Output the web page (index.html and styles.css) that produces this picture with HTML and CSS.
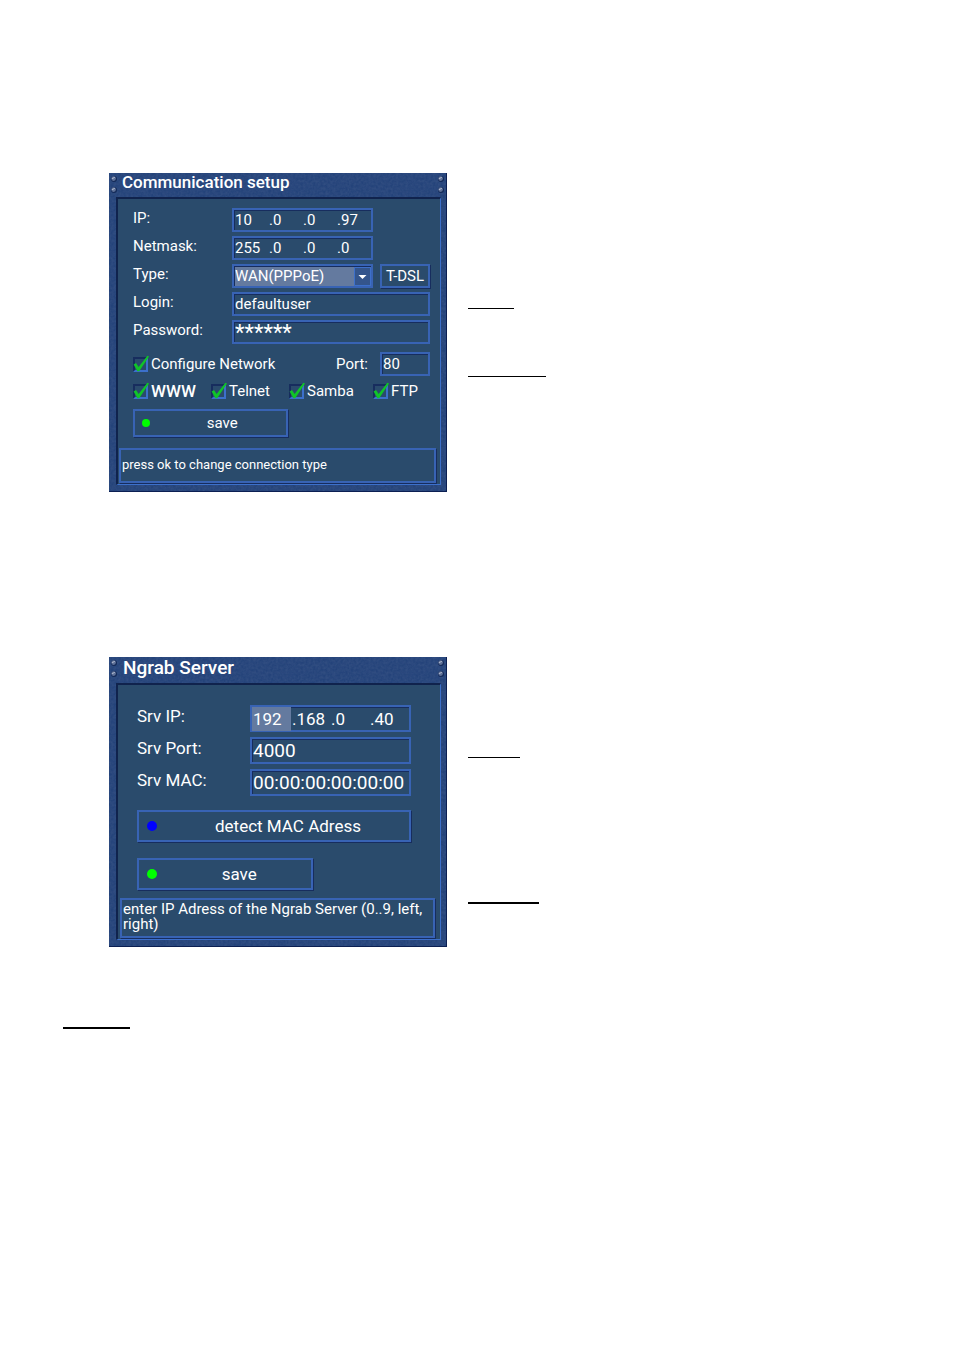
FILE: index.html
```
<!DOCTYPE html>
<html lang="en">
<head>
<meta charset="utf-8">
<meta name="viewport" content="width=device-width, initial-scale=1">
<title>Network setup</title>
<link rel="stylesheet" href="styles.css">
</head>
<body>
<svg class="defs" aria-hidden="true">
  <symbol id="tick" viewBox="0 0 17 17"><path d="M.6 9.6 3 8 5.6 12 14.4.8 16 1.6 6.2 16.2 4.4 16.2Z" fill="#10c428"/></symbol>
  <symbol id="screws" viewBox="0 0 8 18">
    <circle cx="4" cy="4" r="3" fill="#142a58"/><circle cx="3.6" cy="3.6" r="2.3" fill="#5f7198"/><path d="M2 3.6 4.8 2.4" stroke="#b3bdd0"/>
    <circle cx="4" cy="15" r="3" fill="#142a58"/><circle cx="3.6" cy="14.6" r="2.3" fill="#5f7198"/><path d="M2 14.6 4.8 13.4" stroke="#b3bdd0"/>
  </symbol>
</svg>
<main class="page">
  <section class="entry">
    <form class="window">
      <header class="titlebar">
        <svg class="screws"><use href="#screws"/></svg>
        <h2 class="title">Communication setup</h2>
        <svg class="screws"><use href="#screws"/></svg>
      </header>
      <div class="panel">
        <div class="fields">
          <label for="ip1">IP:</label>
          <div class="box segments">
            <span class="seg"><input id="ip1" value="10"></span>
            <span class="seg">.<input aria-label="IP part 2" value="0"></span>
            <span class="seg">.<input aria-label="IP part 3" value="0"></span>
            <span class="seg">.<input aria-label="IP part 4" value="97"></span>
          </div>
          <label for="nm1">Netmask:</label>
          <div class="box segments">
            <span class="seg"><input id="nm1" value="255"></span>
            <span class="seg">.<input aria-label="Netmask part 2" value="0"></span>
            <span class="seg">.<input aria-label="Netmask part 3" value="0"></span>
            <span class="seg">.<input aria-label="Netmask part 4" value="0"></span>
          </div>
          <label for="type">Type:</label>
          <div class="picker">
            <select id="type" class="box select"><option>WAN(PPPoE)</option></select>
            <svg class="arrow" viewBox="0 0 17 19"><path d="M.5.5h16v18H.5z" fill="#34558c" stroke="#3d70ca"/><path d="M4.5 8h8l-4 4z" fill="#fff"/></svg>
          </div>
          <button type="button" class="box tdsl">T-DSL</button>
          <label for="login">Login:</label>
          <input id="login" class="box wide" value="defaultuser">
          <label for="pass">Password:</label>
          <input id="pass" class="box wide stars" value="******">
        </div>
        <div class="network">
          <label class="check"><input type="checkbox" checked><svg><use href="#tick"/></svg>Configure Network</label>
          <label for="port">Port:</label>
          <input id="port" class="box port" value="80">
        </div>
        <div class="services">
          <label class="check"><input type="checkbox" checked><svg><use href="#tick"/></svg><span class="strong">WWW</span></label>
          <label class="check"><input type="checkbox" checked><svg><use href="#tick"/></svg>Telnet</label>
          <label class="check"><input type="checkbox" checked><svg><use href="#tick"/></svg>Samba</label>
          <label class="check"><input type="checkbox" checked><svg><use href="#tick"/></svg>FTP</label>
        </div>
        <button type="button" class="action save"><i class="dot green"></i><span>save</span></button>
        <p class="status">press ok to change connection type</p>
      </div>
    </form>
    <div class="notes">
      <hr class="rule login-rule">
      <hr class="rule password-rule">
    </div>
  </section>

  <section class="entry">
    <form class="window server">
      <header class="titlebar">
        <svg class="screws"><use href="#screws"/></svg>
        <h2 class="title">Ngrab Server</h2>
        <svg class="screws"><use href="#screws"/></svg>
      </header>
      <div class="panel">
        <div class="fields">
          <label for="srvip">Srv IP:</label>
          <div class="box segments">
            <span class="seg active"><input id="srvip" value="192"></span>
            <span class="seg">.<input aria-label="Srv IP part 2" value="168"></span>
            <span class="seg">.<input aria-label="Srv IP part 3" value="0"></span>
            <span class="seg">.<input aria-label="Srv IP part 4" value="40"></span>
          </div>
          <label for="srvport">Srv Port:</label>
          <input id="srvport" class="box" value="4000">
          <label for="srvmac">Srv MAC:</label>
          <input id="srvmac" class="box" value="00:00:00:00:00:00">
        </div>
        <button type="button" class="action detect"><i class="dot blue"></i><span>detect MAC Adress</span></button>
        <button type="button" class="action save"><i class="dot green"></i><span>save</span></button>
        <p class="status">enter IP Adress of the Ngrab Server (0..9, left, right)</p>
      </div>
    </form>
    <div class="notes">
      <hr class="rule ip-rule">
      <hr class="rule detect-rule">
    </div>
  </section>
  <hr class="rule section-rule">
</main>
</body>
</html>
```
FILE: styles.css
```
* { box-sizing: border-box; }
body { margin: 0; background: #fff; color: #000; font-family: Roboto, "Liberation Sans", sans-serif; }
.defs { position: absolute; width: 0; height: 0; }
.page { padding: 173px 0 80px 63px; }
.entry {
  display: grid;
  grid-template-columns: minmax(338px, 40%) 1fr;
  column-gap: 21px;
  margin: 0 0 165px 46px;
}
.entry + .entry { margin-bottom: 80px; }

.window {
  display: flex;
  flex-direction: column;
  padding: 0 5px 6px 7px;
  color: #fff;
  background-color: #24437a;
  background-image: url("data:image/svg+xml,%3Csvg xmlns='http://www.w3.org/2000/svg' width='120' height='120'%3E%3Cfilter id='n'%3E%3CfeTurbulence type='fractalNoise' baseFrequency='.4' numOctaves='2' stitchTiles='stitch'/%3E%3CfeColorMatrix values='0 0 0 0 .05 0 0 0 0 .1 0 0 0 0 .25 1 0 0 0 -.25'/%3E%3C/filter%3E%3Crect width='120' height='120' filter='url(%23n)' opacity='.8'/%3E%3C/svg%3E");
  border-bottom: 1px solid #0b1f52;
  border-right: 1px solid #0b1f52;
}
.titlebar { display: flex; align-items: flex-start; height: 24px; margin: 0 -4px 0 -6px; }
.screws { width: 8px; height: 18px; margin-top: 2px; }
.title { flex: 1; margin: 0 0 0 4px; font-size: 17px; line-height: 19px; font-weight: 500; }

.panel {
  flex: 1;
  display: flex;
  flex-direction: column;
  padding: 9px 4px 1px 1px;
  background: #2a4b6c;
  border: 2px solid #10234d;
  border-right: 1px solid #3c70cb;
  border-bottom: 1px solid #3c70cb;
}
.fields, .network, .services { margin: 0 6px 0 14px; font-size: 15px; }
.fields {
  display: grid;
  grid-template-columns: 92px minmax(0, 1fr) 50px;
  column-gap: 7px;
  row-gap: 4px;
}
.fields > label { grid-column: 1; line-height: 20px; }
.box {
  width: 100%;
  min-width: 0;
  height: 24px;
  margin: 0;
  padding: 0 1px;
  border: 2px solid #3863b4;
  border-radius: 0;
  outline: 0;
  background: #2a4b6c;
  box-shadow: inset 1px 1px #172d5e;
  color: #fff;
  font: inherit;
}
.wide { grid-column: 2 / 4; }
.segments { display: grid; grid-template-columns: 34px 34px 34px 1fr; line-height: 21px; padding: 0; }
.seg { display: flex; min-width: 0; padding-left: 1px; }
.seg input { flex: 1; width: 0; min-width: 0; padding: 0; border: 0; outline: 0; background: none; color: inherit; font: inherit; }
.active { background: #647a9f; }
.picker { position: relative; display: flex; }
.select { appearance: none; background: #647a9f; }
.arrow { position: absolute; top: 3px; right: 2px; width: 17px; height: 19px; pointer-events: none; }
.tdsl { box-shadow: 1px 1px #172d5e; }
.stars { font-size: 22px; line-height: 20px; }

.network { display: flex; align-items: center; margin-top: 8px; }
.network .check { flex: 1; }
.port { width: 50px; margin-left: 12px; }
.services { display: grid; grid-template-columns: 78px 78px 84px 1fr; margin-top: 5px; }
.check { position: relative; display: flex; align-items: center; gap: 3px; height: 20px; }
.check input { appearance: none; width: 15px; height: 15px; margin: 0; border: 2px solid #172d5e; border-right-color: #3c70cb; border-bottom-color: #3c70cb; }
.check svg { position: absolute; top: 1px; left: 0; width: 17px; height: 17px; pointer-events: none; }
.strong { font-size: 17px; font-weight: 500; }

.action {
  display: flex;
  align-items: center;
  height: 28px;
  margin: 8px 0 0 14px;
  padding: 0 0 0 7px;
  border: 2px solid #3863b4;
  background: #2a4b6c;
  box-shadow: 1px 1px #172d5e;
  color: #fff;
  font: 15px Roboto, sans-serif;
}
.action span { flex: 1; padding-left: 8px; text-align: center; }
.save { width: 49%; }
.dot { width: 8px; height: 8px; border-radius: 50%; }
.green { background: #0f0; }
.blue { background: #00f; }
.status {
  margin: 11px 0 0;
  min-height: 35px;
  padding: 7px 1px;
  border: 2px solid #3863b4;
  box-shadow: 1px 1px #172d5e;
  font-size: 13px;
  line-height: 16px;
}

.server .titlebar { height: 26px; }
.server .title { margin-left: 5px; font-size: 19px; line-height: 22px; }
.server .panel { padding: 20px 5px 1px 2px; }
.server .fields { margin: 0 24px 0 17px; font-size: 17px; grid-template-columns: 106px minmax(0, 1fr); row-gap: 5px; }
.server .fields > label { line-height: 22px; }
.server .box { height: 27px; font-size: 19px; }
.server .segments { grid-template-columns: 39px 39px 39px 1fr; line-height: 24px; font-size: 17px; }
.server .action { height: 32px; margin: 14px 24px 0 17px; padding-left: 8px; font-size: 17px; }
.server .action span { padding-left: 10px; }
.server .save { width: 56%; margin-top: 16px; }
.server .dot { width: 10px; height: 10px; }
.server .status { margin-top: 8px; min-height: 40px; padding: 2px 0 3px 1px; font-size: 15px; line-height: 15px; }

.notes { display: flex; flex-direction: column; }
.rule { margin: 0; border: 0; height: 1px; background: #000; }
.login-rule { width: 46px; margin-top: 135px; }
.password-rule { width: 78px; margin-top: 67px; }
.ip-rule { width: 52px; margin-top: 100px; }
.detect-rule { width: 71px; height: 2px; margin-top: 144px; }
.section-rule { width: 67px; height: 2px; }
```
